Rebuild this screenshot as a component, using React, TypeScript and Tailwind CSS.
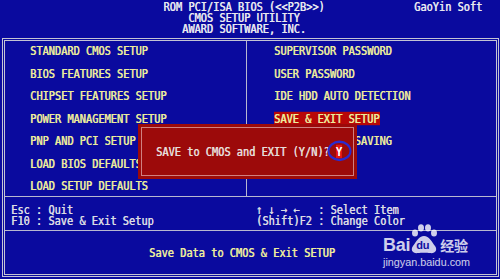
import React from 'react';

// BIOS text line: narrow monospace glyphs stretched vertically
const Line: React.FC<{ children: React.ReactNode; className?: string }> = ({ children, className = '' }) => (
  <div className={`h-[11px] leading-[11px] whitespace-pre ${className}`}>
    <span className="inline-block scale-y-[1.22] [text-shadow:0.45px_0_0_currentColor]">{children}</span>
  </div>
);

const leftMenu = [
  'STANDARD CMOS SETUP',
  'BIOS FEATURES SETUP',
  'CHIPSET FEATURES SETUP',
  'POWER MANAGEMENT SETUP',
  'PNP AND PCI SETUP',
  'LOAD BIOS DEFAULTS',
  'LOAD SETUP DEFAULTS',
];

const rightMenu = [
  'SUPERVISOR PASSWORD',
  'USER PASSWORD',
  'IDE HDD AUTO DETECTION',
  'SAVE & EXIT SETUP',
  'EXIT WITHOUT SAVING',
];

const BaiduMark = () => (
  <div className="absolute left-[383px] top-[224px] flex flex-col items-start opacity-80 text-white">
    <div className="flex items-end h-[30px]">
      <span className="font-['Liberation_Sans',sans-serif] font-bold text-[18px] leading-[18px] tracking-[-0.3px]">Bai</span>
      <div className="relative w-[28px] h-[30px]">
        <svg width="28" height="30" viewBox="0 0 28 30" className="absolute left-0 top-0">
          <ellipse cx="5" cy="9" rx="3" ry="3.6" fill="white" />
          <ellipse cx="11" cy="3.8" rx="3" ry="3.6" fill="white" />
          <ellipse cx="18" cy="3.8" rx="3" ry="3.6" fill="white" />
          <ellipse cx="24" cy="9" rx="3" ry="3.6" fill="white" />
          <path d="M14 12 C 9 12, 6 18, 3 22 C 0 26, 3 30, 8 29 C 11 28.5, 17 28.5, 20 29 C 25 30, 28 26, 25 22 C 22 18, 19 12, 14 12 Z" fill="white" />
        </svg>
        <span className="absolute left-[6px] top-[16px] font-['Liberation_Sans',sans-serif] font-bold text-[11px] leading-[11px] text-[#1010a0]">du</span>
      </div>
      <span className="ml-[2px] font-['Noto_Sans_CJK_SC',sans-serif] font-bold text-[14px] leading-[18px]">经验</span>
    </div>
    <span className="mt-[2px] font-['Liberation_Sans',sans-serif] text-[10.8px] leading-[12px]">jingyan.baidu.com</span>
  </div>
);

export default function App() {
  return (
    <div className="relative w-[500px] h-[279px] overflow-hidden bg-[#0a0a9e] font-['DejaVu_Sans_Mono',monospace] text-[10.3px] text-[#ecec9c]">
      {/* Header */}
      <div className="relative h-[38px] pt-[1px] text-[#e8e8f0]">
        <div className="w-[488px] text-center">
          <Line>ROM PCI/ISA BIOS (&lt;&lt;P2B&gt;&gt;)</Line>
          <Line>CMOS SETUP UTILITY</Line>
          <Line>AWARD SOFTWARE, INC.</Line>
        </div>
        <div className="absolute left-[414px] top-[1px]">
          <Line>GaoYin Soft</Line>
        </div>
      </div>

      {/* Main frame */}
      <div className="mx-[2px] w-[497px] border-[3px] border-double border-[#c4c4d4] flex flex-col">
        {/* Menu */}
        <div className="h-[155px] flex">
          <div className="w-[241px] pt-[4px] pl-[25px] flex flex-col gap-[11.5px]">
            {leftMenu.map((m) => (
              <Line key={m}>{m}</Line>
            ))}
          </div>
          <div className="w-px bg-[#b8b8d0]" />
          <div className="flex-1 pt-[4px] pl-[27px] flex flex-col gap-[11.5px]">
            {rightMenu.map((m) => (
              <Line key={m}>
                {m === 'SAVE & EXIT SETUP' ? (
                  <span className="inline-block bg-[#b80808] pr-[1px]">{m}</span>
                ) : (
                  m
                )}
              </Line>
            ))}
          </div>
        </div>

        <div className="h-px bg-[#b8b8d0]" />

        {/* Key help */}
        <div className="h-[33px] flex pt-[7px] text-[#dcdce4]">
          <div className="w-[245px] pl-[6px]">
            <Line>Esc : Quit</Line>
            <Line>F10 : Save &amp; Exit Setup</Line>
          </div>
          <div className="flex-1 pl-[6px]">
            <Line>↑ ↓ → ←   : Select Item</Line>
            <Line>(Shift)F2 : Change Color</Line>
          </div>
        </div>

        <div className="h-px bg-[#b8b8d0]" />

        {/* Status */}
        <div className="h-[43px] flex items-center pl-[144px]">
          <Line>Save Data to CMOS &amp; Exit SETUP</Line>
        </div>
      </div>

      {/* Confirm dialog */}
      <div className="absolute left-[138px] top-[124px] w-[219px] h-[55px] bg-[#9c0a0a] p-[3px]">
        <div className="h-full border border-[#d08080] flex items-center pl-[14px] text-[#e6dcd8]">
          <Line>
            SAVE to CMOS and EXIT (Y/N)? <span className="relative inline-block bg-[#e41414] text-white">
              Y
              <svg className="absolute left-[-9px] top-[-4px]" width="25" height="18" viewBox="0 0 25 18">
                <ellipse cx="12.5" cy="9" rx="11" ry="7.5" fill="none" stroke="#2a2ad0" strokeWidth="2" />
              </svg>
            </span>
          </Line>
        </div>
      </div>

      <BaiduMark />
    </div>
  );
}
